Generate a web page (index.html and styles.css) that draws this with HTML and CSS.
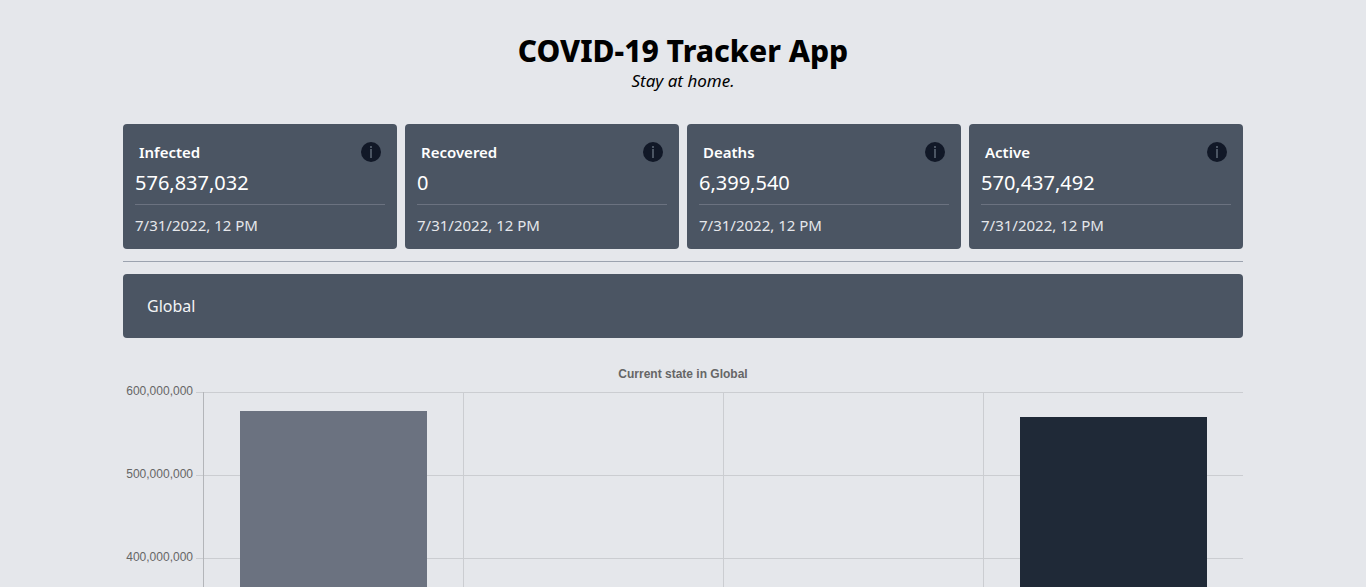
FILE: index.html
```html
<!DOCTYPE html>
<html lang="en">
<head>
<meta charset="utf-8">
<meta name="viewport" content="width=device-width, initial-scale=1">
<title>COVID-19 Tracker App</title>
<link rel="stylesheet" href="styles.css">
</head>
<body>
<svg class="symbols" aria-hidden="true">
  <symbol id="info" viewBox="0 0 20 20">
    <circle class="info-disc" cx="10" cy="10" r="10"/>
    <rect class="info-mark" x="9" y="4" width="2" height="2"/>
    <rect class="info-mark" x="9" y="7" width="2" height="9"/>
  </symbol>
</svg>
<main class="page">
  <header class="header">
    <h1 class="title">COVID-19 Tracker App</h1>
    <p class="subtitle">Stay at home.</p>
  </header>
  <section class="cards">
    <article class="card">
      <div class="card-head"><h2 class="card-title">Infected</h2><svg class="info"><use href="#info"/></svg></div>
      <p class="card-value">576,837,032</p>
      <p class="card-date">7/31/2022, 12 PM</p>
    </article>
    <article class="card">
      <div class="card-head"><h2 class="card-title">Recovered</h2><svg class="info"><use href="#info"/></svg></div>
      <p class="card-value">0</p>
      <p class="card-date">7/31/2022, 12 PM</p>
    </article>
    <article class="card">
      <div class="card-head"><h2 class="card-title">Deaths</h2><svg class="info"><use href="#info"/></svg></div>
      <p class="card-value">6,399,540</p>
      <p class="card-date">7/31/2022, 12 PM</p>
    </article>
    <article class="card">
      <div class="card-head"><h2 class="card-title">Active</h2><svg class="info"><use href="#info"/></svg></div>
      <p class="card-value">570,437,492</p>
      <p class="card-date">7/31/2022, 12 PM</p>
    </article>
  </section>
  <div class="region">
    <select class="region-select" aria-label="Region"><option>Global</option></select>
  </div>
  <figure class="chart">
    <figcaption class="chart-title">Current state in Global</figcaption>
    <ul class="axis">
      <li class="tick">600,000,000</li>
      <li class="tick">500,000,000</li>
      <li class="tick">400,000,000</li>
    </ul>
    <div class="plot">
      <div class="slot"><div class="bar bar-infected"></div></div>
      <div class="slot"></div>
      <div class="slot"></div>
      <div class="slot"><div class="bar bar-active"></div></div>
    </div>
  </figure>
</main>
</body>
</html>
```
FILE: styles.css
```css
* { box-sizing: border-box; }
body {
  margin: 0;
  background: #e5e7eb;
  color: #000;
  font-family: "Noto Sans", "Open Sans", sans-serif;
  font-size: 16px;
  line-height: 24px;
}
h1, h2, p, ul, figure { margin: 0; padding: 0; }
.symbols { display: none; }
.page {
  display: flex;
  flex-direction: column;
  max-width: 1152px;
  height: 100vh;
  overflow: hidden;
  margin: 0 auto;
  padding: 32px 16px 0;
}
.header { padding-bottom: 32px; text-align: center; }
.title { font-size: 30px; line-height: 38px; font-weight: 800; }
.subtitle { font-size: 17px; line-height: 22px; font-style: italic; }
.cards { display: grid; grid-template-columns: repeat(4, 1fr); gap: 8px; }
.card {
  padding: 12px;
  border-radius: 4px;
  background: #4b5563;
  color: #fff;
}
.card-head {
  display: flex;
  align-items: center;
  justify-content: space-between;
  height: 32px;
  padding: 0 4px;
}
.card-title { font-size: 15px; line-height: 24px; font-weight: 600; }
.info { width: 20px; height: 20px; }
.info-disc { fill: #111827; }
.info-mark { fill: #4b5563; }
.card-value {
  height: 36px;
  font-size: 20px;
  line-height: 30px;
}
.card-date {
  padding-top: 8px;
  border-top: 1px solid #6b7280;
  color: #e5e7eb;
  font-size: 15px;
  line-height: 24px;
}
.region {
  margin-top: 12px;
  padding-top: 12px;
  border-top: 1px solid #9ca3af;
}
.region-select {
  display: block;
  width: 100%;
  height: 64px;
  padding: 0 24px;
  border: 0;
  border-radius: 4px;
  appearance: none;
  background: #4b5563;
  color: #f3f4f6;
  font: inherit;
}
.chart {
  display: grid;
  grid-template-columns: 80px 1fr;
  grid-template-rows: 17px 1fr;
  flex: 1;
  min-height: 0;
  margin-top: 28px;
  color: #666;
  font-family: "Liberation Sans", Arial, sans-serif;
  font-size: 12px;
  line-height: 16px;
}
.chart-title { grid-column: 1 / -1; font-weight: 700; text-align: center; }
.axis { min-height: 0; list-style: none; overflow: hidden; }
.tick {
  display: flex;
  justify-content: flex-end;
  gap: 3px;
  height: 83px;
}
.tick::after {
  content: "";
  width: 7px;
  height: 1px;
  margin-top: 9px;
  background: #cbcdd1;
}
.plot {
  display: grid;
  grid-template-columns: repeat(4, 1fr);
  min-height: 0;
  margin-top: 9px;
  background: repeating-linear-gradient(#cbcdd1 0 1px, transparent 1px 83px);
}
.slot {
  display: flex;
  align-items: flex-end;
  border-left: 1px solid #cbcdd1;
}
.slot:first-child { border-color: #b3b5b9; }
.bar { width: 72%; margin: 0 auto; }
.bar-infected { height: calc(100% - 19px); background: #6b7280; }
.bar-active { height: calc(100% - 25px); background: #1f2937; }
```
